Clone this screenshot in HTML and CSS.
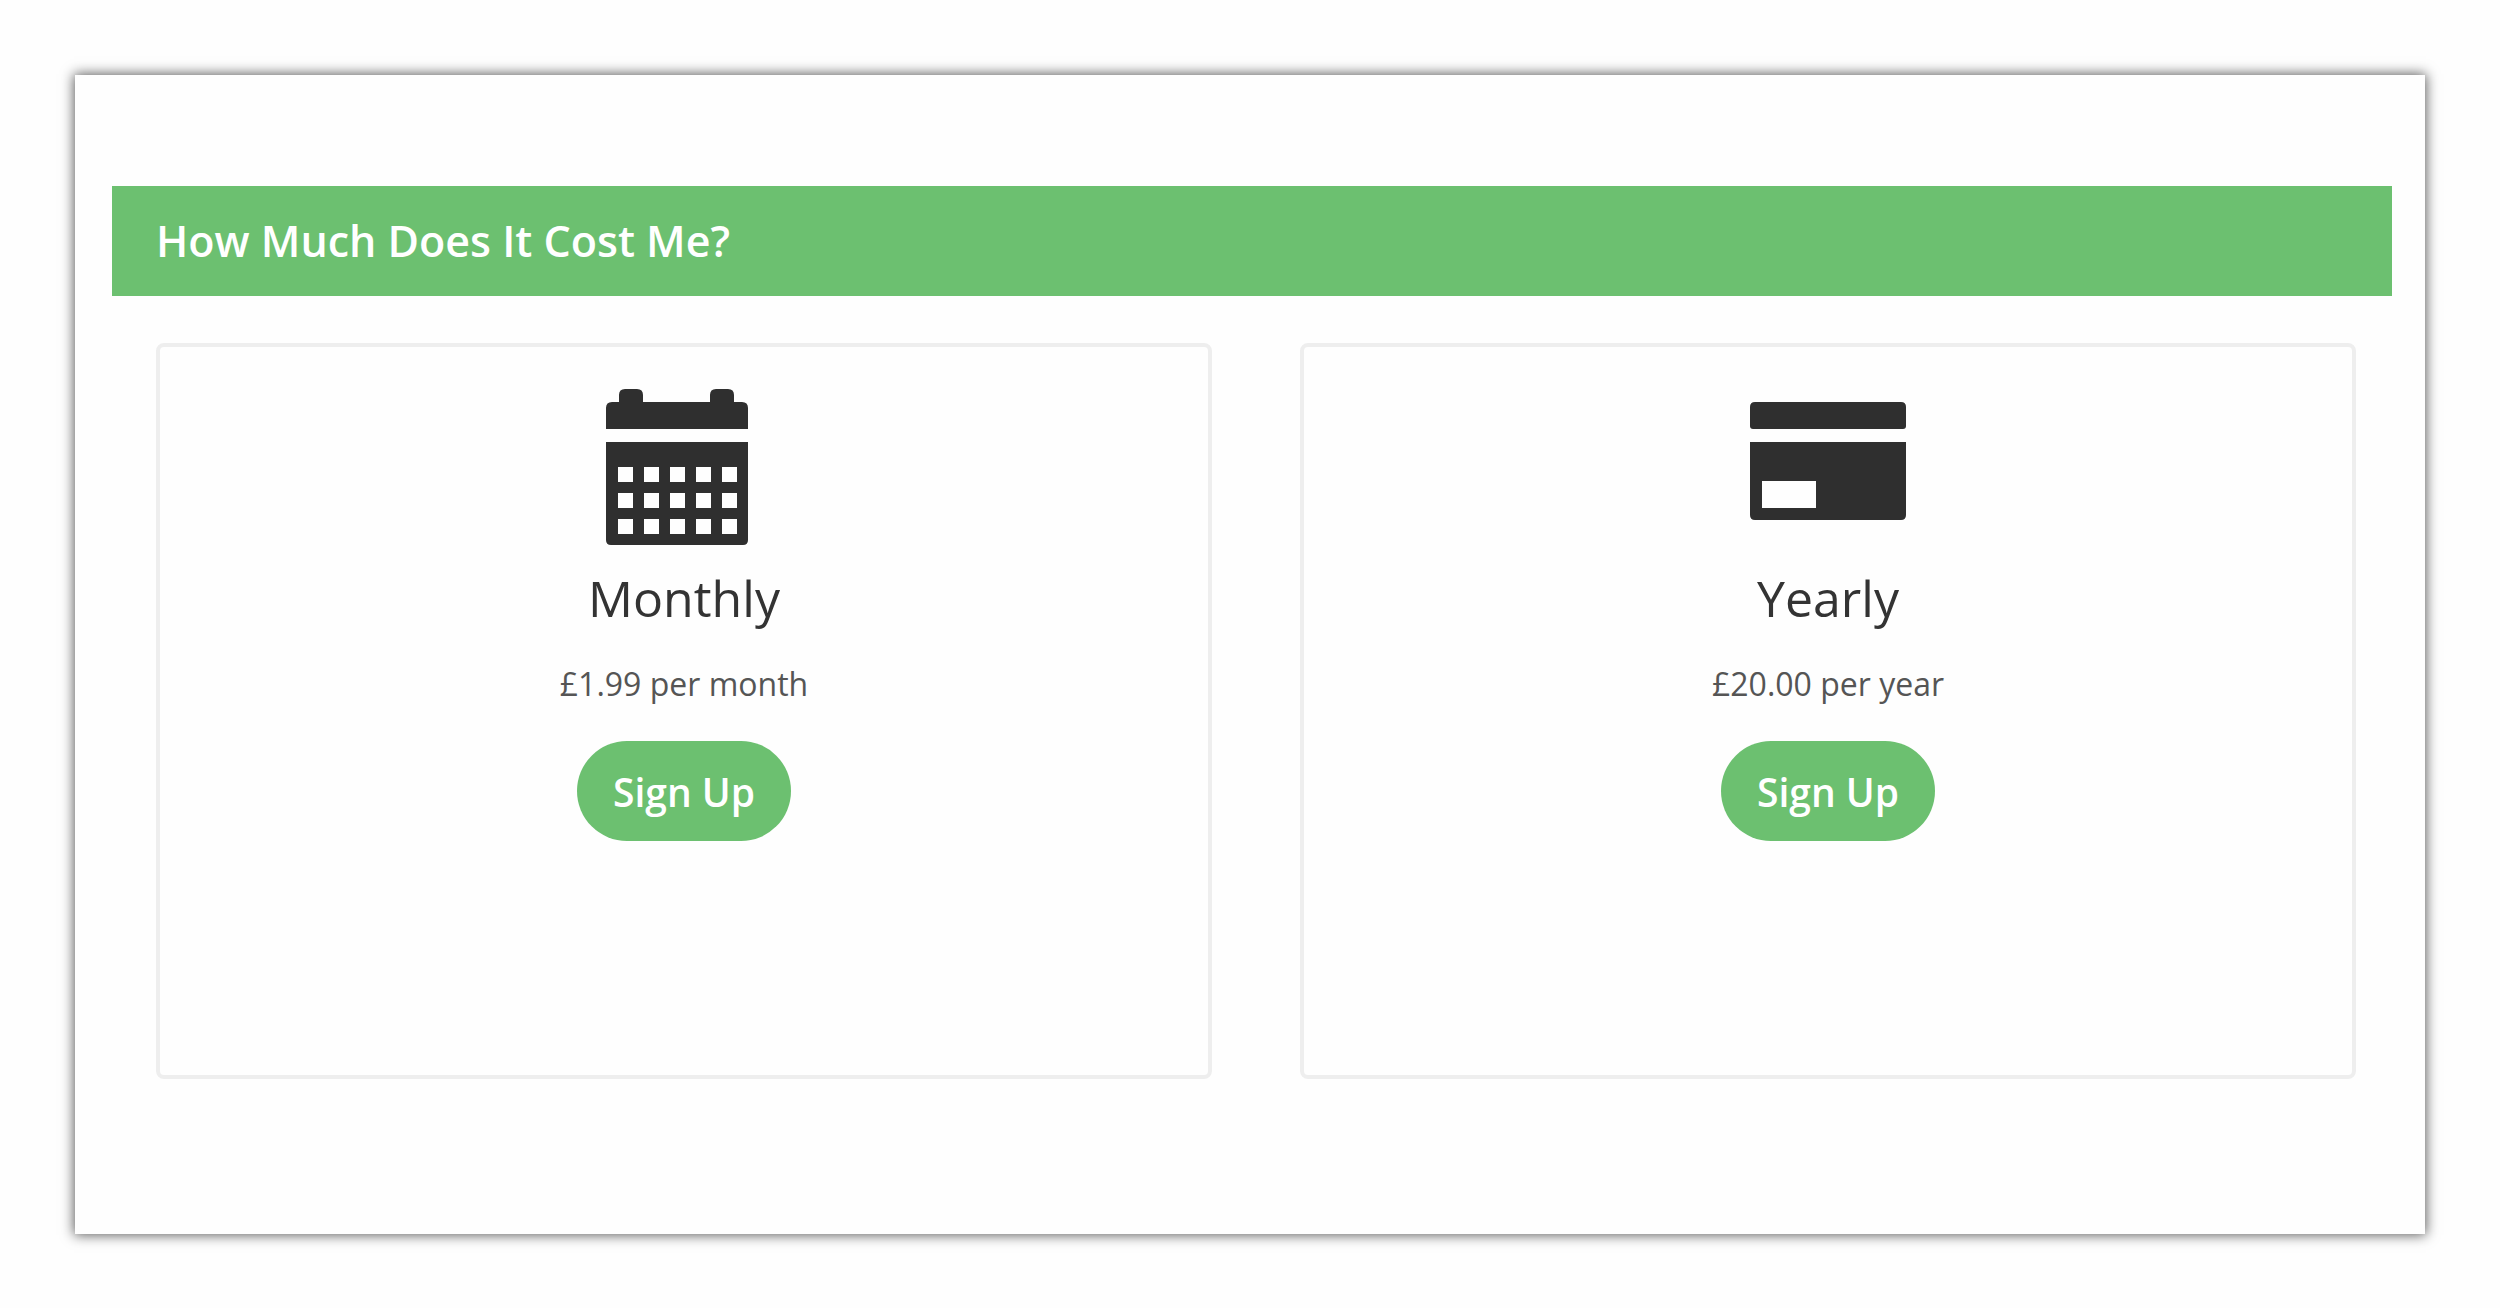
FILE: index.html
```
<!DOCTYPE html>
<html lang="en">
<head>
    <meta charset="UTF-8">
    <meta name="viewport" content="width=device-width, initial-scale=1.0">
    <link rel="stylesheet" href="styles.css">
    <title>Pricing</title>
</head>
<body>
    <main class="panel">
        <h1 class="title">How Much Does It Cost Me?</h1>
        <div class="plans">
            <section class="plan">
                <!-- Calendar -->
                <svg class="icon" viewBox="0 0 158 158" aria-hidden="true">
                    <path d="M1 41V20q0-6 6-6h7V7q0-6 6-6h12q6 0 6 6v7h67V7q0-6 6-6h12q6 0 6 6v7h8q6 0 6 6v21z"/>
                    <path fill-rule="evenodd" d="M1 54h142v98q0 5-5 5H6q-5 0-5-5z
                        M13 79v15h15v-15z m26 0v15h15v-15z m26 0v15h15v-15z m26 0v15h15v-15z m26 0v15h15v-15z
                        M13 105v15h15v-15z m26 0v15h15v-15z m26 0v15h15v-15z m26 0v15h15v-15z m26 0v15h15v-15z
                        M13 131v15h15v-15z m26 0v15h15v-15z m26 0v15h15v-15z m26 0v15h15v-15z m26 0v15h15v-15z"/>
                </svg>
                <h2 class="plan-name">Monthly</h2>
                <p class="price">£1.99 per month</p>
                <button type="button" class="btn">Sign Up</button>
            </section>
            <section class="plan">
                <!-- Credit card -->
                <svg class="icon" viewBox="0 0 158 158" aria-hidden="true">
                    <path d="M1 38V19q0-5 5-5h146q5 0 5 5v19q0 3-3 3H4q-3 0-3-3z"/>
                    <path fill-rule="evenodd" d="M1 54h156v73q0 5-5 5H6q-5 0-5-5z M13 93v27h54V93z"/>
                </svg>
                <h2 class="plan-name">Yearly</h2>
                <p class="price">£20.00 per year</p>
                <button type="button" class="btn">Sign Up</button>
            </section>
        </div>
    </main>
</body>
</html>
```
FILE: styles.css
```
* {
    box-sizing: border-box;
}

body {
    margin: 0;
    padding: 75px;
    background-color: #fefefe;
    color: #333;
    font-family: "Open Sans", "Noto Sans", sans-serif;
}

.panel {
    padding: 111px 33px 155px 37px;
    background-color: #fefefe;
    box-shadow: 0 0 12px 1px rgba(0, 0, 0, 0.65);
}

.title {
    margin: 0;
    padding: 25px 44px;
    background-color: #6cc070;
    color: #fff;
    font-size: 43px;
    font-weight: 600;
    line-height: 60px;
}

.plans {
    display: flex;
    gap: 88px;
    padding: 47px 36px 0 44px;
}

.plan {
    display: flex;
    flex: 1;
    flex-direction: column;
    align-items: center;
    padding: 41px 40px 234px;
    border: 4px solid #eee;
    border-radius: 8px;
}

.icon {
    width: 158px;
    height: 158px;
    fill: #2f2f2f;
}

.plan-name {
    margin: 18px 0 0;
    font-size: 50px;
    font-weight: 400;
    line-height: 68px;
}

.price {
    margin: 30px 0 0;
    color: #555;
    font-size: 32px;
    line-height: 44px;
}

.btn {
    height: 100px;
    margin-top: 35px;
    padding: 0 36px;
    border: 0;
    border-radius: 50px;
    background-color: #6cc070;
    color: #fff;
    font-family: inherit;
    font-size: 39px;
    font-weight: 600;
    cursor: pointer;
}
```
